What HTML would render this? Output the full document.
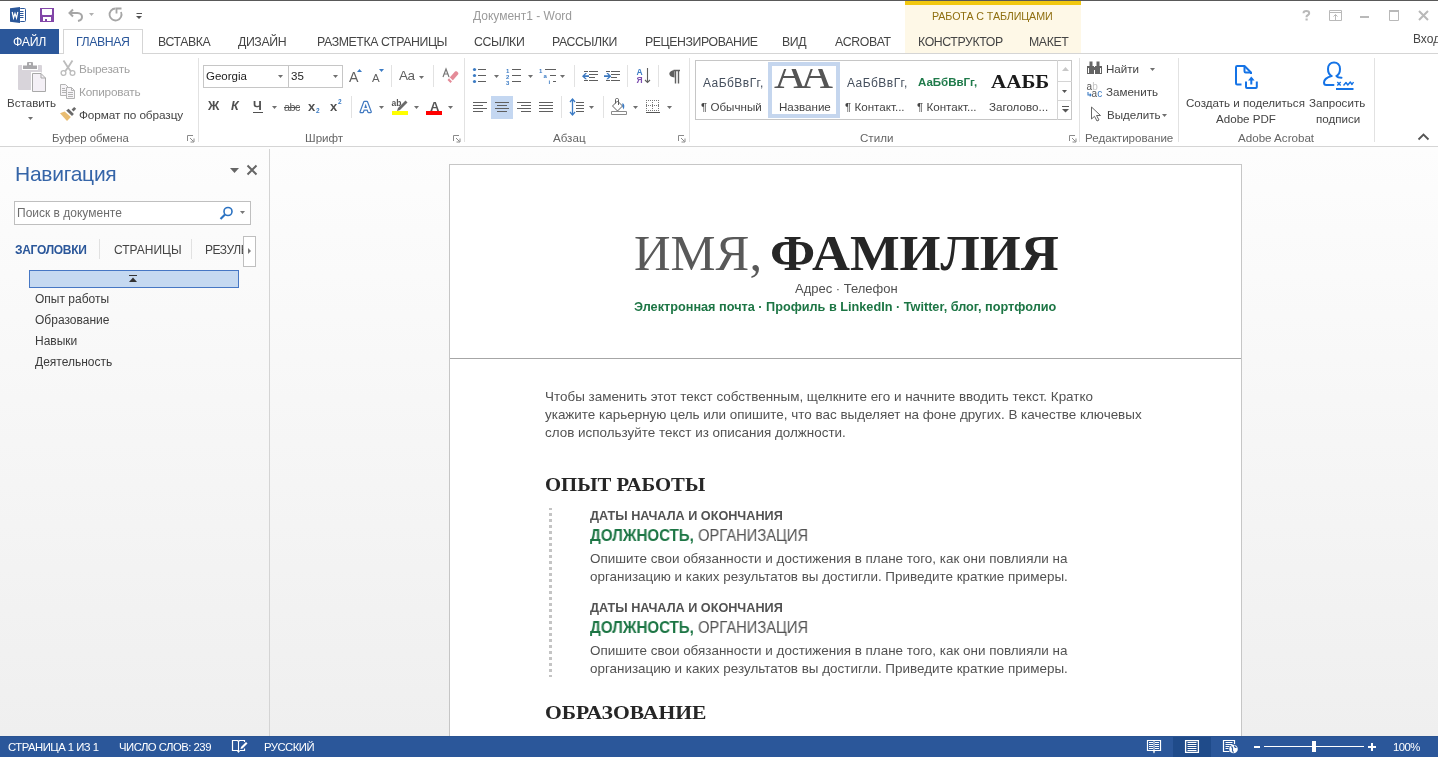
<!DOCTYPE html>
<html><head><meta charset="utf-8"><title>Word</title>
<style>
html,body{margin:0;padding:0;width:1438px;height:757px;overflow:hidden;background:#fff;font-family:"Liberation Sans",sans-serif}
.t{position:absolute;white-space:nowrap;will-change:transform}
.r{position:absolute}
.s{position:absolute;overflow:visible;will-change:transform}
</style></head><body>
<div class="r" style="left:0px;top:0px;width:1438px;height:1px;background:#595959"></div>
<div class="r" style="left:0px;top:1px;width:1438px;height:146px;background:#fff"></div>
<div class="r" style="left:905px;top:1px;width:176px;height:52px;background:#fef8e7"></div>
<div class="r" style="left:905px;top:1px;width:176px;height:4px;background:#f2c80f"></div>
<div class="r" style="left:0px;top:53px;width:1438px;height:1px;background:#d5d5d5"></div>
<div class="r" style="left:0px;top:146px;width:1438px;height:1px;background:#d5d5d5"></div>
<div class="r" style="left:0px;top:147px;width:1438px;height:589px;background:linear-gradient(#fdfdfd,#efefef)"></div>
<div class="r" style="left:269px;top:149px;width:1px;height:587px;background:#d4d4d4"></div>
<div class="r" style="left:0px;top:736px;width:1438px;height:21px;background:#2b579a"></div>
<svg class="s" style="left:10px;top:7px;" width="17" height="17" viewBox="0 0 17 17">
<rect x="9.5" y="1.5" width="6" height="13" rx="1" fill="#fff" stroke="#2b579a" stroke-width="1"/>
<path d="M10 4.5H13.5M10 6.5H13.5M10 8.5H13.5M10 10.5H13.5" stroke="#2b579a" stroke-width="1"/>
<path d="M0 1.2L10 0V16L0 14.8Z" fill="#2b579a"/>
<path d="M2.2 5L3.5 11L5 6.5L6.5 11L7.8 5" fill="none" stroke="#fff" stroke-width="1.2"/>
</svg>
<svg class="s" style="left:40px;top:8px;" width="14" height="14" viewBox="0 0 14 14">
<path d="M0 0H14V14H0Z" fill="#8246a8"/>
<path d="M2 1H12V6C12 6.6 11.6 7 11 7H3C2.4 7 2 6.6 2 6Z" fill="#fff"/>
<path d="M3 9H11V13H3Z" fill="#fff"/>
<path d="M5 11H7V13H5Z" fill="#8246a8"/>
</svg>
<svg class="s" style="left:67px;top:7px;" width="18" height="15" viewBox="0 0 18 15">
<path d="M6 2.5L2.5 6L6 9.5" fill="none" stroke="#a6a6a6" stroke-width="2"/>
<path d="M3 6H10.5C13.5 6 15 8 15 10C15 12 13.5 13.5 11 14" fill="none" stroke="#a6a6a6" stroke-width="2"/>
</svg>
<svg class="s" style="left:89px;top:13px;" width="6" height="4" viewBox="0 0 6 4"><path d="M0 0H5L2.5 3Z" fill="#b0b0b0"/></svg>
<svg class="s" style="left:107px;top:7px;" width="17" height="16" viewBox="0 0 17 16">
<path d="M8.5 1.5A6 6 0 1 0 14 5" fill="none" stroke="#a6a6a6" stroke-width="1.8"/>
<path d="M9.5 6.5V1.5H14.5" fill="none" stroke="#a6a6a6" stroke-width="1.8"/>
</svg>
<svg class="s" style="left:136px;top:12px;" width="7" height="8" viewBox="0 0 7 8"><path d="M0.5 1.5H6" stroke="#555" stroke-width="1"/><path d="M0 4H6L3 7Z" fill="#555"/></svg>
<div class="t" style="left:473px;top:10.00px;font-size:12px;line-height:12px;color:#9a9a9a;font-weight:normal;font-family:'Liberation Sans', sans-serif;">Документ1 - Word</div>
<div class="t" style="left:932px;top:11.00px;font-size:10.7px;line-height:10.7px;color:#8f6f10;font-weight:normal;font-family:'Liberation Sans', sans-serif;letter-spacing:-0.1px">РАБОТА С ТАБЛИЦАМИ</div>
<svg class="s" style="left:1302px;top:10px;" width="9" height="11" viewBox="0 0 9 11"><path d="M1.5 3.2C1.5 1.8 2.8 1 4.3 1C6 1 7.2 1.9 7.2 3.2C7.2 4.8 5.3 5 4.6 6.3V7.2" fill="none" stroke="#b9b9b9" stroke-width="2"/><path d="M3.5 8.5H5.7V10.5H3.5Z" fill="#b9b9b9"/></svg>
<svg class="s" style="left:1329px;top:10px;" width="14" height="11" viewBox="0 0 14 11"><path d="M0.5 0.5H12.5V10.5H0.5Z" fill="none" stroke="#b9b9b9"/><path d="M1 2.5H12" stroke="#b9b9b9"/><path d="M6.5 10V4.5M4.5 6.5L6.5 4.5L8.5 6.5" fill="none" stroke="#b9b9b9"/></svg>
<div class="r" style="left:1360px;top:16px;width:9px;height:2px;background:#b9b9b9"></div>
<svg class="s" style="left:1389px;top:10px;" width="10" height="11" viewBox="0 0 10 11"><path d="M0.5 0.5H9.5V10.5H0.5Z" fill="none" stroke="#b9b9b9"/><path d="M0 0H10V2H0Z" fill="#b9b9b9"/></svg>
<svg class="s" style="left:1418px;top:10px;" width="11" height="11" viewBox="0 0 11 11"><path d="M1 1L10 10M10 1L1 10" stroke="#b9b9b9" stroke-width="2"/></svg>
<div class="r" style="left:0px;top:29px;width:59px;height:25px;background:#2b579a"></div>
<div class="t" style="left:13px;top:36.00px;font-size:12.3px;line-height:12.3px;color:#fff;font-weight:normal;font-family:'Liberation Sans', sans-serif;letter-spacing:-0.3px">ФАЙЛ</div>
<div class="r" style="left:63px;top:29px;width:80px;height:25px;background:#fff;border:1px solid #d5d5d5;border-bottom:none;box-sizing:border-box"></div>
<div class="t" style="left:76px;top:36.00px;font-size:12.3px;line-height:12.3px;color:#2b579a;font-weight:normal;font-family:'Liberation Sans', sans-serif;letter-spacing:-0.4px">ГЛАВНАЯ</div>
<div class="t" style="left:158px;top:36.00px;font-size:12.3px;line-height:12.3px;color:#444;font-weight:normal;font-family:'Liberation Sans', sans-serif;letter-spacing:-0.4px">ВСТАВКА</div>
<div class="t" style="left:238px;top:36.00px;font-size:12.3px;line-height:12.3px;color:#444;font-weight:normal;font-family:'Liberation Sans', sans-serif;letter-spacing:-0.4px">ДИЗАЙН</div>
<div class="t" style="left:317px;top:36.00px;font-size:12.3px;line-height:12.3px;color:#444;font-weight:normal;font-family:'Liberation Sans', sans-serif;letter-spacing:-0.4px">РАЗМЕТКА СТРАНИЦЫ</div>
<div class="t" style="left:474px;top:36.00px;font-size:12.3px;line-height:12.3px;color:#444;font-weight:normal;font-family:'Liberation Sans', sans-serif;letter-spacing:-0.4px">ССЫЛКИ</div>
<div class="t" style="left:552px;top:36.00px;font-size:12.3px;line-height:12.3px;color:#444;font-weight:normal;font-family:'Liberation Sans', sans-serif;letter-spacing:-0.4px">РАССЫЛКИ</div>
<div class="t" style="left:645px;top:36.00px;font-size:12.3px;line-height:12.3px;color:#444;font-weight:normal;font-family:'Liberation Sans', sans-serif;letter-spacing:-0.4px">РЕЦЕНЗИРОВАНИЕ</div>
<div class="t" style="left:782px;top:36.00px;font-size:12.3px;line-height:12.3px;color:#444;font-weight:normal;font-family:'Liberation Sans', sans-serif;letter-spacing:-0.4px">ВИД</div>
<div class="t" style="left:835px;top:36.00px;font-size:12.3px;line-height:12.3px;color:#444;font-weight:normal;font-family:'Liberation Sans', sans-serif;letter-spacing:-0.4px">ACROBAT</div>
<div class="t" style="left:918px;top:36.00px;font-size:12.3px;line-height:12.3px;color:#444;font-weight:normal;font-family:'Liberation Sans', sans-serif;letter-spacing:-0.4px">КОНСТРУКТОР</div>
<div class="t" style="left:1029px;top:36.00px;font-size:12.3px;line-height:12.3px;color:#444;font-weight:normal;font-family:'Liberation Sans', sans-serif;letter-spacing:-0.4px">МАКЕТ</div>
<div class="t" style="left:1412.5px;top:33.00px;font-size:12px;line-height:12px;color:#444;font-weight:normal;font-family:'Liberation Sans', sans-serif;">Вход</div>
<div class="r" style="left:198px;top:58px;width:1px;height:84px;background:#e2e2e2"></div>
<div class="r" style="left:464px;top:58px;width:1px;height:84px;background:#e2e2e2"></div>
<div class="r" style="left:689px;top:58px;width:1px;height:84px;background:#e2e2e2"></div>
<div class="r" style="left:1079px;top:58px;width:1px;height:84px;background:#e2e2e2"></div>
<div class="r" style="left:1178px;top:58px;width:1px;height:84px;background:#e2e2e2"></div>
<div class="r" style="left:1374px;top:58px;width:1px;height:84px;background:#e2e2e2"></div>
<svg class="s" style="left:17px;top:61px;" width="31" height="32" viewBox="0 0 31 32">
<rect x="1" y="4" width="24" height="25" rx="1" fill="#d8d4da"/>
<rect x="5" y="3" width="16" height="6" fill="#fff"/>
<rect x="6" y="4.5" width="14" height="3.5" fill="#a9a8ab"/>
<rect x="10" y="1" width="6" height="5" rx="1" fill="#a9a8ab"/>
<rect x="12" y="2.2" width="2" height="1.6" fill="#fff"/>
<path d="M14 11H24L30 17V32H14Z" fill="#fff"/>
<path d="M15.5 12.5H24L28.5 17V30.5H15.5Z" fill="#f4f0f6" stroke="#a9a9a9"/>
<path d="M24 12.5V17H28.5" fill="none" stroke="#a9a9a9"/>
</svg>
<div class="t" style="left:6.5px;top:97.00px;font-size:11.6px;line-height:11.6px;color:#444;font-weight:normal;font-family:'Liberation Sans', sans-serif;">Вставить</div>
<svg class="s" style="left:28px;top:117px;" width="6" height="4" viewBox="0 0 6 4"><path d="M0 0H5L2.5 3Z" fill="#6f6f6f"/></svg>
<svg class="s" style="left:60px;top:60px;" width="16" height="16" viewBox="0 0 16 16">
<path d="M3.5 0.5L8 7.5M12.5 0.5L8 7.5M8 7.5L5 11.5M8 7.5L11 11.5" stroke="#bcbcbc" stroke-width="1.8" fill="none"/>
<circle cx="3.5" cy="13" r="2.4" fill="none" stroke="#bcbcbc" stroke-width="1.3"/>
<circle cx="12.5" cy="13" r="2.4" fill="none" stroke="#bcbcbc" stroke-width="1.3"/>
</svg>
<div class="t" style="left:79px;top:64.00px;font-size:11.8px;line-height:11.8px;color:#a2a2a2;font-weight:normal;font-family:'Liberation Sans', sans-serif;letter-spacing:-0.2px">Вырезать</div>
<svg class="s" style="left:59px;top:83px;" width="17" height="16" viewBox="0 0 17 16">
<path d="M1.5 1.5H6.5L9.5 4.5V12.5H1.5Z" fill="#f7f5f8" stroke="#b3b3b3"/>
<path d="M3 5.5H6M3 7.5H7M3 9.5H7" stroke="#b3b3b3"/>
<path d="M7.5 4.5H12.5L15.5 7.5V15.5H7.5Z" fill="#f7f5f8" stroke="#b3b3b3"/>
<path d="M9 9.5H14M9 11.5H14M9 13.5H14M12.5 4.5V7.5H15.5" fill="none" stroke="#b3b3b3"/>
</svg>
<div class="t" style="left:79px;top:87.00px;font-size:11.8px;line-height:11.8px;color:#a2a2a2;font-weight:normal;font-family:'Liberation Sans', sans-serif;letter-spacing:-0.2px">Копировать</div>
<svg class="s" style="left:56px;top:102px;" width="24" height="22" viewBox="0 0 24 22">
<path d="M4 11.2L8.6 9.4L14.9 15L11 19Z" fill="#e9bd72"/>
<path d="M10.2 8.4L12.6 6.8L17.9 12L16 14Z" fill="#6a6a6a"/>
<path d="M15.6 7.4L18.2 4.9L20.2 6.8L17.5 9.4Z" fill="#6a6a6a"/>
</svg>
<div class="t" style="left:79px;top:110.00px;font-size:11.8px;line-height:11.8px;color:#444;font-weight:normal;font-family:'Liberation Sans', sans-serif;letter-spacing:-0.1px">Формат по образцу</div>
<div class="t" style="left:52px;top:133.00px;font-size:11.3px;line-height:11.3px;color:#666;font-weight:normal;font-family:'Liberation Sans', sans-serif;">Буфер обмена</div>
<svg class="s" style="left:187px;top:135px;" width="8" height="8" viewBox="0 0 8 8"><path d="M0.5 6V0.5H6" fill="none" stroke="#8a8a8a"/><path d="M3 3L6.5 6.5M7 3.5V7H3.5" fill="none" stroke="#8a8a8a"/></svg>
<div class="r" style="left:203px;top:65px;width:86px;height:23px;background:#fff;border:1px solid #c6c6c6;box-sizing:border-box"></div>
<div class="r" style="left:288px;top:65px;width:55px;height:23px;background:#fff;border:1px solid #c6c6c6;box-sizing:border-box"></div>
<div class="t" style="left:206px;top:71.00px;font-size:11.5px;line-height:11.5px;color:#222;font-weight:normal;font-family:'Liberation Sans', sans-serif;">Georgia</div>
<div class="t" style="left:291px;top:71.00px;font-size:11.5px;line-height:11.5px;color:#222;font-weight:normal;font-family:'Liberation Sans', sans-serif;">35</div>
<svg class="s" style="left:278px;top:75px;" width="6" height="4" viewBox="0 0 6 4"><path d="M0 0H5L2.5 3Z" fill="#6f6f6f"/></svg>
<svg class="s" style="left:333px;top:75px;" width="6" height="4" viewBox="0 0 6 4"><path d="M0 0H5L2.5 3Z" fill="#6f6f6f"/></svg>
<div class="t" style="left:349px;top:70.00px;font-size:14.2px;line-height:14.2px;color:#606060;font-weight:normal;font-family:'Liberation Sans', sans-serif;">A</div>
<svg class="s" style="left:357px;top:69px;" width="6" height="3" viewBox="0 0 6 3"><path d="M0 3L2.5 0L5 3Z" fill="#3b7bc4"/></svg>
<div class="t" style="left:371.5px;top:73.00px;font-size:11.5px;line-height:11.5px;color:#606060;font-weight:normal;font-family:'Liberation Sans', sans-serif;">A</div>
<svg class="s" style="left:379px;top:69px;" width="6" height="3" viewBox="0 0 6 3"><path d="M0 0L2.5 3L5 0Z" fill="#3b7bc4"/></svg>
<div class="r" style="left:391px;top:65px;width:1px;height:22px;background:#e2e2e2"></div>
<div class="t" style="left:399px;top:69.00px;font-size:13.5px;line-height:13.5px;color:#606060;font-weight:normal;font-family:'Liberation Sans', sans-serif;letter-spacing:-0.6px">Aa</div>
<svg class="s" style="left:419px;top:76px;" width="6" height="4" viewBox="0 0 6 4"><path d="M0 0H5L2.5 3Z" fill="#6f6f6f"/></svg>
<div class="r" style="left:433px;top:65px;width:1px;height:22px;background:#e2e2e2"></div>
<svg class="s" style="left:442px;top:67px;" width="17" height="18" viewBox="0 0 17 18">
<path d="M1 10L4 2L7 10M2.2 7H5.8" fill="none" stroke="#777" stroke-width="1.2"/>
<path d="M5.5 13L13 4.5C13.5 4 14.5 4 15 4.5L16 5.5C16.5 6 16.5 7 16 7.5L8.5 16Z" fill="#e48b98"/>
<path d="M7.5 11L11 14.5" stroke="#fff" stroke-width="1.2"/>
</svg>
<div class="t" style="left:207.5px;top:100.00px;font-size:12.5px;line-height:12.5px;color:#505050;font-weight:bold;font-family:'Liberation Sans', sans-serif;">Ж</div>
<div class="t" style="left:231px;top:100.00px;font-size:12.5px;line-height:12.5px;color:#505050;font-weight:bold;font-family:'Liberation Sans', sans-serif;font-style:italic">К</div>
<div class="t" style="left:253px;top:100.00px;font-size:12.5px;line-height:12.5px;color:#505050;font-weight:bold;font-family:'Liberation Sans', sans-serif;">Ч</div>
<div class="r" style="left:253px;top:112px;width:10px;height:1px;background:#505050"></div>
<svg class="s" style="left:272px;top:106px;" width="6" height="4" viewBox="0 0 6 4"><path d="M0 0H5L2.5 3Z" fill="#6f6f6f"/></svg>
<div class="t" style="left:284px;top:102.00px;font-size:10.8px;line-height:10.8px;color:#555;font-weight:normal;font-family:'Liberation Sans', sans-serif;letter-spacing:-0.5px">abc</div>
<div class="r" style="left:284px;top:107px;width:16px;height:1px;background:#555"></div>
<div class="t" style="left:308px;top:100.00px;font-size:13px;line-height:13px;color:#505050;font-weight:bold;font-family:'Liberation Sans', sans-serif;">x</div>
<div class="t" style="left:315.5px;top:108.00px;font-size:6.5px;line-height:6.5px;color:#3b7bc4;font-weight:bold;font-family:'Liberation Sans', sans-serif;">2</div>
<div class="t" style="left:330px;top:100.00px;font-size:13px;line-height:13px;color:#505050;font-weight:bold;font-family:'Liberation Sans', sans-serif;">x</div>
<div class="t" style="left:337.5px;top:99.00px;font-size:6.5px;line-height:6.5px;color:#3b7bc4;font-weight:bold;font-family:'Liberation Sans', sans-serif;">2</div>
<div class="r" style="left:351px;top:96px;width:1px;height:22px;background:#e2e2e2"></div>
<svg class="s" style="left:358px;top:97px;" width="18" height="18" viewBox="0 0 18 18"><text x="2.3" y="15.2" font-family="Liberation Sans" font-weight="bold" font-size="15" fill="#fff" stroke="#3f78c0" stroke-width="2.4" stroke-linejoin="round" paint-order="stroke">A</text></svg>
<svg class="s" style="left:379px;top:106px;" width="6" height="4" viewBox="0 0 6 4"><path d="M0 0H5L2.5 3Z" fill="#6f6f6f"/></svg>
<svg class="s" style="left:391px;top:97px;" width="18" height="19" viewBox="0 0 18 19">
<text x="0.5" y="8.5" font-family="Liberation Sans" font-weight="bold" font-size="8.5" fill="#555">ab</text>
<path d="M6 14L7 11L14.5 3.5L16.5 5.5L9 13Z" fill="#6a6a6a"/>
<path d="M1 14H17V18H1Z" fill="#ffff00"/>
</svg>
<svg class="s" style="left:414px;top:106px;" width="6" height="4" viewBox="0 0 6 4"><path d="M0 0H5L2.5 3Z" fill="#6f6f6f"/></svg>
<div class="t" style="left:429.5px;top:100.00px;font-size:13px;line-height:13px;color:#555;font-weight:bold;font-family:'Liberation Sans', sans-serif;">A</div>
<div class="r" style="left:426px;top:111px;width:16px;height:4px;background:#ff0000"></div>
<svg class="s" style="left:448px;top:106px;" width="6" height="4" viewBox="0 0 6 4"><path d="M0 0H5L2.5 3Z" fill="#6f6f6f"/></svg>
<div class="t" style="left:305px;top:132.00px;font-size:11.6px;line-height:11.6px;color:#666;font-weight:normal;font-family:'Liberation Sans', sans-serif;">Шрифт</div>
<svg class="s" style="left:453px;top:135px;" width="8" height="8" viewBox="0 0 8 8"><path d="M0.5 6V0.5H6" fill="none" stroke="#8a8a8a"/><path d="M3 3L6.5 6.5M7 3.5V7H3.5" fill="none" stroke="#8a8a8a"/></svg>
<svg class="s" style="left:472px;top:67px;" width="16" height="16" viewBox="0 0 16 16"><circle cx="2.5" cy="2.5" r="1.6" fill="#3b7bc4"/><circle cx="2.5" cy="8.5" r="1.6" fill="#3b7bc4"/><circle cx="2.5" cy="14.5" r="1.6" fill="#3b7bc4"/><path d="M6 2.5H14M6 8.5H14M6 14.5H14" stroke="#5f5f5f"/></svg>
<svg class="s" style="left:494px;top:75px;" width="6" height="4" viewBox="0 0 6 4"><path d="M0 0H5L2.5 3Z" fill="#6f6f6f"/></svg>
<svg class="s" style="left:505px;top:66px;" width="17" height="18" viewBox="0 0 17 18"><text x="1" y="6.5" font-size="6" font-weight="bold" font-family="Liberation Sans" fill="#3b7bc4">1</text><text x="1" y="12.5" font-size="6" font-weight="bold" font-family="Liberation Sans" fill="#3b7bc4">2</text><text x="1" y="18.5" font-size="6" font-weight="bold" font-family="Liberation Sans" fill="#3b7bc4">3</text><path d="M7 3.5H16M7 9.5H16M7 15.5H16" stroke="#5f5f5f"/></svg>
<svg class="s" style="left:528px;top:75px;" width="6" height="4" viewBox="0 0 6 4"><path d="M0 0H5L2.5 3Z" fill="#6f6f6f"/></svg>
<svg class="s" style="left:538px;top:66px;" width="19" height="19" viewBox="0 0 19 19"><text x="1" y="6.5" font-size="6" font-weight="bold" font-family="Liberation Sans" fill="#3b7bc4">1</text><text x="5.5" y="11.5" font-size="6" font-weight="bold" font-family="Liberation Sans" fill="#3b7bc4">a</text><text x="10.5" y="18" font-size="6" font-weight="bold" font-family="Liberation Sans" fill="#3b7bc4">i</text><path d="M7 3.5H18M12 9.5H18M15 15.5H18" stroke="#5f5f5f"/></svg>
<svg class="s" style="left:560px;top:75px;" width="6" height="4" viewBox="0 0 6 4"><path d="M0 0H5L2.5 3Z" fill="#6f6f6f"/></svg>
<div class="r" style="left:574px;top:65px;width:1px;height:22px;background:#e2e2e2"></div>
<svg class="s" style="left:581px;top:70px;" width="18" height="12" viewBox="0 0 18 12"><path d="M3 1.5H7M8 1.5H17M8 4.5H17M8 7.5H14M3 10.5H7M8 10.5H17" stroke="#5f5f5f"/><path d="M1 6.2L4.3 3H6L3.8 5.2H8V7.1H3.8L6 9.3H4.3Z" fill="#3b78c0"/></svg>
<svg class="s" style="left:603px;top:70px;" width="18" height="12" viewBox="0 0 18 12"><path d="M3 1.5H7M8 1.5H17M8 4.5H17M8 7.5H14M3 10.5H7M8 10.5H17" stroke="#5f5f5f"/><path d="M8.3 6.2L5 3H3.3L5.5 5.2H1V7.1H5.5L3.3 9.3H5Z" fill="#3b78c0"/></svg>
<div class="r" style="left:627px;top:65px;width:1px;height:22px;background:#e2e2e2"></div>
<svg class="s" style="left:636px;top:67px;" width="16" height="17" viewBox="0 0 16 17"><text x="0.5" y="8" font-size="8.5" font-weight="bold" font-family="Liberation Sans" fill="#3b7bc4">A</text><text x="0.5" y="16" font-size="8.5" font-weight="bold" font-family="Liberation Sans" fill="#7e4fb0">Я</text><path d="M11.5 1V15.5M9 13L11.5 15.5L14 13" fill="none" stroke="#5f5f5f" stroke-width="1.1"/></svg>
<div class="r" style="left:658px;top:65px;width:1px;height:22px;background:#e2e2e2"></div>
<svg class="s" style="left:669px;top:70px;" width="12" height="14" viewBox="0 0 12 14"><path d="M4.5 0.5H11M6.5 0.5V13.5M9.5 0.5V13.5" stroke="#5f5f5f" stroke-width="1.4" fill="none"/><path d="M5.5 0.2C2 0.2 0.3 2 0.3 3.8C0.3 5.6 2 7.4 5.5 7.4Z" fill="#5f5f5f"/></svg>
<div class="r" style="left:491px;top:96px;width:22px;height:23px;background:#c4d7f1"></div>
<svg class="s" style="left:473px;top:102px;" width="14" height="10" viewBox="0 0 14 10"><path d="M0 0.5H14M0 3.5H10M0 6.5H14M0 9.5H10" stroke="#5f5f5f"/></svg>
<svg class="s" style="left:495px;top:102px;" width="14" height="10" viewBox="0 0 14 10"><path d="M0 0.5H14M2 3.5H12M0 6.5H14M2 9.5H12" stroke="#5f5f5f"/></svg>
<svg class="s" style="left:517px;top:102px;" width="14" height="10" viewBox="0 0 14 10"><path d="M0 0.5H14M4 3.5H14M0 6.5H14M4 9.5H14" stroke="#5f5f5f"/></svg>
<svg class="s" style="left:539px;top:102px;" width="14" height="10" viewBox="0 0 14 10"><path d="M0 0.5H14M0 3.5H14M0 6.5H14M0 9.5H14" stroke="#5f5f5f"/></svg>
<div class="r" style="left:561px;top:96px;width:1px;height:22px;background:#e2e2e2"></div>
<svg class="s" style="left:569px;top:98px;" width="16" height="18" viewBox="0 0 16 18"><path d="M3.5 1.5V16.5" stroke="#3b7bc4" stroke-width="1.3"/><path d="M1 4L3.5 1L6 4M1 14L3.5 17L6 14" fill="none" stroke="#3b7bc4" stroke-width="1.3"/><path d="M7 4.5H15M7 7.5H15M7 10.5H15M7 13.5H15" stroke="#5f5f5f"/></svg>
<svg class="s" style="left:589px;top:106px;" width="6" height="4" viewBox="0 0 6 4"><path d="M0 0H5L2.5 3Z" fill="#6f6f6f"/></svg>
<div class="r" style="left:603px;top:96px;width:1px;height:22px;background:#e2e2e2"></div>
<svg class="s" style="left:610px;top:98px;" width="18" height="18" viewBox="0 0 18 18"><path d="M2.5 8L7.5 3L12.5 8L7.5 13Z" fill="#fff" stroke="#606060"/><path d="M5.5 5.5V1.5C5.5 0.9 6 0.5 6.5 0.5H7.5C8 0.5 8.5 0.9 8.5 1.5V7" fill="none" stroke="#606060"/><path d="M12.5 5C14.5 6 15 8.5 13.5 11.5C12.5 9 12 8 12.5 5Z" fill="#3b7bc4"/><path d="M1.5 13.5H16.5V16.5H1.5Z" fill="#fff" stroke="#8a8a8a"/></svg>
<svg class="s" style="left:633px;top:106px;" width="6" height="4" viewBox="0 0 6 4"><path d="M0 0H5L2.5 3Z" fill="#6f6f6f"/></svg>
<svg class="s" style="left:646px;top:100px;" width="14" height="13" viewBox="0 0 14 13"><g fill="#777"><rect x="0" y="0" width="1" height="1"/><rect x="2" y="0" width="1" height="1"/><rect x="4" y="0" width="1" height="1"/><rect x="6" y="0" width="1" height="1"/><rect x="8" y="0" width="1" height="1"/><rect x="10" y="0" width="1" height="1"/><rect x="12" y="0" width="1" height="1"/><rect x="0" y="5" width="1" height="1"/><rect x="2" y="5" width="1" height="1"/><rect x="4" y="5" width="1" height="1"/><rect x="6" y="5" width="1" height="1"/><rect x="8" y="5" width="1" height="1"/><rect x="10" y="5" width="1" height="1"/><rect x="12" y="5" width="1" height="1"/><rect x="0" y="10" width="1" height="1"/><rect x="2" y="10" width="1" height="1"/><rect x="4" y="10" width="1" height="1"/><rect x="6" y="10" width="1" height="1"/><rect x="8" y="10" width="1" height="1"/><rect x="10" y="10" width="1" height="1"/><rect x="12" y="10" width="1" height="1"/><rect x="0" y="2" width="1" height="1"/><rect x="0" y="4" width="1" height="1"/><rect x="0" y="6" width="1" height="1"/><rect x="0" y="8" width="1" height="1"/><rect x="6" y="2" width="1" height="1"/><rect x="6" y="4" width="1" height="1"/><rect x="6" y="6" width="1" height="1"/><rect x="6" y="8" width="1" height="1"/><rect x="12" y="2" width="1" height="1"/><rect x="12" y="4" width="1" height="1"/><rect x="12" y="6" width="1" height="1"/><rect x="12" y="8" width="1" height="1"/></g><rect x="0" y="12" width="14" height="1" fill="#555"/></svg>
<svg class="s" style="left:667px;top:106px;" width="6" height="4" viewBox="0 0 6 4"><path d="M0 0H5L2.5 3Z" fill="#6f6f6f"/></svg>
<div class="t" style="left:553px;top:132.00px;font-size:11.6px;line-height:11.6px;color:#666;font-weight:normal;font-family:'Liberation Sans', sans-serif;">Абзац</div>
<svg class="s" style="left:678px;top:135px;" width="8" height="8" viewBox="0 0 8 8"><path d="M0.5 6V0.5H6" fill="none" stroke="#8a8a8a"/><path d="M3 3L6.5 6.5M7 3.5V7H3.5" fill="none" stroke="#8a8a8a"/></svg>
<div class="r" style="left:695px;top:60px;width:377px;height:60px;background:#fff;border:1px solid #c6c6c6;box-sizing:border-box"></div>
<div class="r" style="left:1057px;top:60px;width:15px;height:60px;border-left:1px solid #d4d4d4;box-sizing:border-box"></div>
<div class="r" style="left:1058px;top:81px;width:14px;height:1px;background:#d4d4d4"></div>
<div class="r" style="left:1058px;top:100px;width:14px;height:1px;background:#d4d4d4"></div>
<svg class="s" style="left:1062px;top:67px;" width="7" height="4" viewBox="0 0 7 4"><path d="M0 4H7L3.5 0Z" fill="#c8c8c8"/></svg>
<svg class="s" style="left:1062px;top:90px;" width="6" height="4" viewBox="0 0 6 4"><path d="M0 0H5L2.5 3Z" fill="#555"/></svg>
<svg class="s" style="left:1062px;top:106px;" width="7" height="7" viewBox="0 0 7 7"><path d="M0 0.5H7" stroke="#555"/><path d="M0 3H7L3.5 6.5Z" fill="#555"/></svg>
<div class="r" style="left:768px;top:62px;width:72px;height:56px;border:4px solid #c5d6ee;box-sizing:border-box"></div>
<div class="t" style="left:702.5px;top:77.00px;font-size:12px;line-height:12px;color:#46505e;font-weight:normal;font-family:'Liberation Sans', sans-serif;letter-spacing:0.45px">АаБбВвГг,</div>
<div class="t" style="left:700.5px;top:101.00px;font-size:11.6px;line-height:11.6px;color:#444;font-weight:normal;font-family:'Liberation Sans', sans-serif;">¶ Обычный</div>
<div class="r" style="left:772px;top:69px;width:64px;height:21px;overflow:hidden">
<div class="t" style="left:2px;top:-18.00px;font-size:45px;line-height:45px;color:#555;font-weight:normal;font-family:'Liberation Serif', serif;letter-spacing:-6px">AA</div>
</div>
<div class="t" style="left:778.5px;top:101.00px;font-size:11.6px;line-height:11.6px;color:#444;font-weight:normal;font-family:'Liberation Sans', sans-serif;">Название</div>
<div class="t" style="left:846.5px;top:77.00px;font-size:12px;line-height:12px;color:#46505e;font-weight:normal;font-family:'Liberation Sans', sans-serif;letter-spacing:0.45px">АаБбВвГг,</div>
<div class="t" style="left:845px;top:101.00px;font-size:11.6px;line-height:11.6px;color:#444;font-weight:normal;font-family:'Liberation Sans', sans-serif;">¶ Контакт...</div>
<div class="t" style="left:918px;top:77.00px;font-size:11.5px;line-height:11.5px;color:#1f7a4a;font-weight:bold;font-family:'Liberation Sans', sans-serif;">АаБбВвГг,</div>
<div class="t" style="left:917px;top:101.00px;font-size:11.6px;line-height:11.6px;color:#444;font-weight:normal;font-family:'Liberation Sans', sans-serif;">¶ Контакт...</div>
<div class="r" style="left:990px;top:66px;width:59px;height:26px;overflow:hidden">
<div class="t" style="left:1px;top:7.00px;font-size:18px;line-height:18px;color:#1b1b1b;font-weight:bold;font-family:'Liberation Serif', serif;transform:scaleX(1.17);transform-origin:0 0">ААББВ</div>
</div>
<div class="t" style="left:989px;top:101.00px;font-size:11.6px;line-height:11.6px;color:#444;font-weight:normal;font-family:'Liberation Sans', sans-serif;">Заголово...</div>
<div class="t" style="left:860px;top:132.00px;font-size:11.6px;line-height:11.6px;color:#666;font-weight:normal;font-family:'Liberation Sans', sans-serif;">Стили</div>
<svg class="s" style="left:1069px;top:135px;" width="8" height="8" viewBox="0 0 8 8"><path d="M0.5 6V0.5H6" fill="none" stroke="#8a8a8a"/><path d="M3 3L6.5 6.5M7 3.5V7H3.5" fill="none" stroke="#8a8a8a"/></svg>
<svg class="s" style="left:1087px;top:61px;" width="15" height="13" viewBox="0 0 15 13"><path d="M2.5 0.5H5.5V5H2.5ZM9.5 0.5H12.5V5H9.5Z" fill="#666"/><path d="M0 5H7V13H0ZM8 5H15V13H8ZM6 6H9V9H6Z" fill="#636363"/><path d="M1.5 7V12M13.5 7V12" stroke="#fff"/><circle cx="7.5" cy="4" r="0.8" fill="#fff"/></svg>
<div class="t" style="left:1106px;top:63.00px;font-size:11.6px;line-height:11.6px;color:#444;font-weight:normal;font-family:'Liberation Sans', sans-serif;">Найти</div>
<svg class="s" style="left:1150px;top:68px;" width="6" height="4" viewBox="0 0 6 4"><path d="M0 0H5L2.5 3Z" fill="#6f6f6f"/></svg>
<svg class="s" style="left:1086px;top:81px;" width="18" height="18" viewBox="0 0 18 18"><text x="0.5" y="9" font-size="10" font-family="Liberation Sans" fill="#555">a</text><text x="6.3" y="9" font-size="10" font-family="Liberation Sans" fill="#c4c4c4">b</text><text x="5.5" y="16" font-size="10" font-family="Liberation Sans" fill="#555">a</text><text x="11.3" y="16" font-size="10" font-family="Liberation Sans" fill="#3b7bc4">c</text><path d="M2 11V14H5M3.8 12.6L5 14L3.8 15.4" stroke="#3b7bc4" fill="none" stroke-width="1.1"/></svg>
<div class="t" style="left:1106px;top:86.00px;font-size:11.6px;line-height:11.6px;color:#444;font-weight:normal;font-family:'Liberation Sans', sans-serif;">Заменить</div>
<svg class="s" style="left:1090px;top:106px;" width="12" height="16" viewBox="0 0 12 16"><path d="M1.5 1V13L4.5 10.3L7 15L9 14L6.5 9.5H10.5Z" fill="#fff" stroke="#666" stroke-linejoin="round"/></svg>
<div class="t" style="left:1106.5px;top:109.00px;font-size:11.6px;line-height:11.6px;color:#444;font-weight:normal;font-family:'Liberation Sans', sans-serif;">Выделить</div>
<svg class="s" style="left:1162px;top:114px;" width="6" height="4" viewBox="0 0 6 4"><path d="M0 0H5L2.5 3Z" fill="#6f6f6f"/></svg>
<div class="t" style="left:1085px;top:132.00px;font-size:11.6px;line-height:11.6px;color:#666;font-weight:normal;font-family:'Liberation Sans', sans-serif;">Редактирование</div>
<svg class="s" style="left:1233px;top:63px;" width="27" height="28" viewBox="0 0 27 28"><path d="M8.5 21.5H4.2C3.5 21.5 3 21 3 20.3V4.2C3 3.5 3.5 3 4.2 3H11.5L18 9.5V11" fill="none" stroke="#1473e6" stroke-width="2" stroke-linejoin="round"/><path d="M11.5 3.5V8.3C11.5 9 12 9.5 12.7 9.5H17.5" fill="none" stroke="#1473e6" stroke-width="2"/><path d="M13 18.5V24C13 24.6 13.4 25 14 25H22.8C23.4 25 23.8 24.6 23.8 24V18.5" fill="none" stroke="#1473e6" stroke-width="2" stroke-linejoin="round"/><path d="M18.3 21.5V15" stroke="#1473e6" stroke-width="2"/><path d="M15 17.5L18.3 13.5L21.6 17.5Z" fill="#1473e6"/></svg>
<div class="t" style="left:1185.5px;top:97.00px;font-size:11.6px;line-height:11.6px;color:#444;font-weight:normal;font-family:'Liberation Sans', sans-serif;">Создать и поделиться</div>
<div class="t" style="left:1215.5px;top:113.00px;font-size:11.6px;line-height:11.6px;color:#444;font-weight:normal;font-family:'Liberation Sans', sans-serif;">Adobe PDF</div>
<svg class="s" style="left:1321px;top:60px;" width="34" height="31" viewBox="0 0 34 31"><path d="M10.5 16C8 14.5 7 11.5 7 9C7 5 9.5 2.5 13 2.5C16.5 2.5 19 5 19 9C19 11.5 18 14.5 15.5 16C16.5 17.5 18.5 17.8 20.5 17.8" fill="none" stroke="#1473e6" stroke-width="2" stroke-linecap="round"/><path d="M10.5 16C5.5 17.5 3 19.5 3 22.5C3 24 3.8 25 5.3 25H12.5" fill="none" stroke="#1473e6" stroke-width="2" stroke-linecap="round"/><path d="M16.3 22L19.7 25.5M19.7 22L16.3 25.5" stroke="#1473e6" stroke-width="1.4"/><path d="M22.5 25.5L25 22.5L26.8 25L29.3 22L31 24.5L32.5 22" fill="none" stroke="#1473e6" stroke-width="1.4" stroke-linejoin="round"/><path d="M15 29H32.5" stroke="#1473e6" stroke-width="2"/></svg>
<div class="t" style="left:1308.5px;top:97.00px;font-size:11.6px;line-height:11.6px;color:#444;font-weight:normal;font-family:'Liberation Sans', sans-serif;">Запросить</div>
<div class="t" style="left:1315.5px;top:113.00px;font-size:11.6px;line-height:11.6px;color:#444;font-weight:normal;font-family:'Liberation Sans', sans-serif;">подписи</div>
<div class="t" style="left:1238px;top:132.00px;font-size:11.6px;line-height:11.6px;color:#666;font-weight:normal;font-family:'Liberation Sans', sans-serif;">Adobe Acrobat</div>
<svg class="s" style="left:1417px;top:133px;" width="13" height="8" viewBox="0 0 13 8"><path d="M1.5 6.5L6.5 1.5L11.5 6.5" fill="none" stroke="#555" stroke-width="1.8"/></svg>
<div class="t" style="left:14.5px;top:163.00px;font-size:21px;line-height:21px;color:#3565a8;font-weight:normal;font-family:'Liberation Sans', sans-serif;letter-spacing:-0.25px">Навигация</div>
<svg class="s" style="left:230px;top:168px;" width="10" height="6" viewBox="0 0 10 6"><path d="M0 0H9L4.5 5Z" fill="#666"/></svg>
<svg class="s" style="left:246px;top:164px;" width="12" height="12" viewBox="0 0 12 12"><path d="M1.5 1.5L10.5 10.5M10.5 1.5L1.5 10.5" stroke="#666" stroke-width="2"/></svg>
<div class="r" style="left:14px;top:201px;width:237px;height:24px;background:#fff;border:1px solid #bfbfbf;box-sizing:border-box"></div>
<div class="t" style="left:17px;top:207.00px;font-size:12px;line-height:12px;color:#6d6d6d;font-weight:normal;font-family:'Liberation Sans', sans-serif;">Поиск в документе</div>
<svg class="s" style="left:219px;top:206px;" width="15" height="14" viewBox="0 0 15 14"><circle cx="9" cy="5.5" r="4" fill="none" stroke="#2b72c2" stroke-width="1.6"/><path d="M6 8.5L1.5 13" stroke="#2b72c2" stroke-width="2.2"/></svg>
<svg class="s" style="left:240px;top:211px;" width="6" height="4" viewBox="0 0 6 4"><path d="M0 0H5L2.5 3Z" fill="#777"/></svg>
<div class="t" style="left:15px;top:244.00px;font-size:12px;line-height:12px;color:#2b579a;font-weight:bold;font-family:'Liberation Sans', sans-serif;letter-spacing:-0.3px">ЗАГОЛОВКИ</div>
<div class="r" style="left:99px;top:239px;width:1px;height:20px;background:#e1e1e1"></div>
<div class="t" style="left:114px;top:244.00px;font-size:12px;line-height:12px;color:#444;font-weight:normal;font-family:'Liberation Sans', sans-serif;">СТРАНИЦЫ</div>
<div class="r" style="left:191px;top:239px;width:1px;height:20px;background:#e1e1e1"></div>
<div class="r" style="left:205px;top:240px;width:40px;height:20px;overflow:hidden">
<div class="t" style="left:0px;top:4.00px;font-size:12px;line-height:12px;color:#444;font-weight:normal;font-family:'Liberation Sans', sans-serif;letter-spacing:-0.45px">РЕЗУЛЬТАТЫ</div>
</div>
<div class="r" style="left:243px;top:236px;width:13px;height:31px;background:#fff;border:1px solid #bfbfbf;box-sizing:border-box"></div>
<svg class="s" style="left:248px;top:248px;" width="4" height="6" viewBox="0 0 4 6"><path d="M0 0L3 3L0 6Z" fill="#777"/></svg>
<div class="r" style="left:29px;top:270px;width:210px;height:18px;background:#c5d9f1;border:1px solid #4677c4;box-sizing:border-box"></div>
<svg class="s" style="left:128px;top:275px;" width="10" height="8" viewBox="0 0 10 8"><path d="M1 0.5H9" stroke="#333"/><path d="M1 7H9L5 2.5Z" fill="#333"/></svg>
<div class="t" style="left:35px;top:293.00px;font-size:12px;line-height:12px;color:#3c3c3c;font-weight:normal;font-family:'Liberation Sans', sans-serif;">Опыт работы</div>
<div class="t" style="left:35px;top:314.00px;font-size:12px;line-height:12px;color:#3c3c3c;font-weight:normal;font-family:'Liberation Sans', sans-serif;">Образование</div>
<div class="t" style="left:35px;top:335.00px;font-size:12px;line-height:12px;color:#3c3c3c;font-weight:normal;font-family:'Liberation Sans', sans-serif;">Навыки</div>
<div class="t" style="left:35px;top:356.00px;font-size:12px;line-height:12px;color:#3c3c3c;font-weight:normal;font-family:'Liberation Sans', sans-serif;">Деятельность</div>
<div class="r" style="left:449px;top:164px;width:793px;height:572px;background:#fff;border:1px solid #c6c6c6;border-bottom:none;box-sizing:border-box"></div>
<div class="r" style="left:450px;top:358px;width:791px;height:1px;background:#a6a6a6"></div>
<div class="t" style="left:634px;top:228.00px;font-size:50px;line-height:50px;color:#595959;font-weight:normal;font-family:'Liberation Serif', serif;transform:scaleX(1.013);transform-origin:0 0">ИМЯ,</div>
<div class="t" style="left:770px;top:228.00px;font-size:50px;line-height:50px;color:#262626;font-weight:bold;font-family:'Liberation Serif', serif;transform:scaleX(1.053);transform-origin:0 0">ФАМИЛИЯ</div>
<div class="t" style="left:795px;top:282.00px;font-size:13px;line-height:13px;color:#505050;font-weight:normal;font-family:'Liberation Sans', sans-serif;">Адрес · Телефон</div>
<div class="t" style="left:634px;top:301.00px;font-size:12.7px;line-height:12.7px;color:#1c7544;font-weight:bold;font-family:'Liberation Sans', sans-serif;">Электронная почта · Профиль в LinkedIn · Twitter, блог, портфолио</div>
<div class="t" style="left:545px;top:390.00px;font-size:13.45px;line-height:13.45px;color:#525252;font-weight:normal;font-family:'Liberation Sans', sans-serif;">Чтобы заменить этот текст собственным, щелкните его и начните вводить текст. Кратко</div>
<div class="t" style="left:545px;top:408.00px;font-size:13.45px;line-height:13.45px;color:#525252;font-weight:normal;font-family:'Liberation Sans', sans-serif;">укажите карьерную цель или опишите, что вас выделяет на фоне других. В качестве ключевых</div>
<div class="t" style="left:545px;top:426.00px;font-size:13.45px;line-height:13.45px;color:#525252;font-weight:normal;font-family:'Liberation Sans', sans-serif;">слов используйте текст из описания должности.</div>
<div class="t" style="left:545px;top:476.00px;font-size:18px;line-height:18px;color:#262626;font-weight:bold;font-family:'Liberation Serif', serif;transform:scaleX(1.15);transform-origin:0 0">ОПЫТ РАБОТЫ</div>
<div class="r" style="left:549px;top:508px;width:3px;height:169px;background:repeating-linear-gradient(#c4c4c4 0 3px, transparent 3px 6px);background-position:0 -1px"></div>
<div class="t" style="left:590px;top:510.00px;font-size:12.67px;line-height:12.67px;color:#525252;font-weight:bold;font-family:'Liberation Sans', sans-serif;">ДАТЫ НАЧАЛА И ОКОНЧАНИЯ</div>
<div class="t" style="left:590px;top:528.00px;font-size:16px;line-height:16px;color:#525252;font-weight:normal;font-family:'Liberation Sans', sans-serif;transform:scaleX(0.944);transform-origin:0 0"><b style="color:#1c7544">ДОЛЖНОСТЬ,</b> <span style="font-size:15.6px">ОРГАНИЗАЦИЯ</span></div>
<div class="t" style="left:590px;top:552.00px;font-size:13.45px;line-height:13.45px;color:#525252;font-weight:normal;font-family:'Liberation Sans', sans-serif;">Опишите свои обязанности и достижения в плане того, как они повлияли на</div>
<div class="t" style="left:590px;top:570.00px;font-size:13.45px;line-height:13.45px;color:#525252;font-weight:normal;font-family:'Liberation Sans', sans-serif;">организацию и каких результатов вы достигли. Приведите краткие примеры.</div>
<div class="t" style="left:590px;top:602.00px;font-size:12.67px;line-height:12.67px;color:#525252;font-weight:bold;font-family:'Liberation Sans', sans-serif;">ДАТЫ НАЧАЛА И ОКОНЧАНИЯ</div>
<div class="t" style="left:590px;top:620.00px;font-size:16px;line-height:16px;color:#525252;font-weight:normal;font-family:'Liberation Sans', sans-serif;transform:scaleX(0.944);transform-origin:0 0"><b style="color:#1c7544">ДОЛЖНОСТЬ,</b> <span style="font-size:15.6px">ОРГАНИЗАЦИЯ</span></div>
<div class="t" style="left:590px;top:644.00px;font-size:13.45px;line-height:13.45px;color:#525252;font-weight:normal;font-family:'Liberation Sans', sans-serif;">Опишите свои обязанности и достижения в плане того, как они повлияли на</div>
<div class="t" style="left:590px;top:662.00px;font-size:13.45px;line-height:13.45px;color:#525252;font-weight:normal;font-family:'Liberation Sans', sans-serif;">организацию и каких результатов вы достигли. Приведите краткие примеры.</div>
<div class="t" style="left:545px;top:704.00px;font-size:18px;line-height:18px;color:#262626;font-weight:bold;font-family:'Liberation Serif', serif;transform:scaleX(1.2);transform-origin:0 0">ОБРАЗОВАНИЕ</div>
<div class="r" style="left:0px;top:736px;width:1438px;height:1px;background:#2a5391"></div>
<div class="t" style="left:8px;top:742.00px;font-size:11.3px;line-height:11.3px;color:#fff;font-weight:normal;font-family:'Liberation Sans', sans-serif;letter-spacing:-0.5px">СТРАНИЦА 1 ИЗ 1</div>
<div class="t" style="left:119px;top:742.00px;font-size:11.3px;line-height:11.3px;color:#fff;font-weight:normal;font-family:'Liberation Sans', sans-serif;letter-spacing:-0.5px">ЧИСЛО СЛОВ: 239</div>
<svg class="s" style="left:231px;top:739px;" width="18" height="15" viewBox="0 0 18 15"><path d="M7.5 11.5H1.5V1.5H6.5L7.5 2.5L8.5 1.5H13.5V3M13.5 9.5V11.5H8.5" fill="none" stroke="#fff" stroke-width="1.2"/><path d="M7.5 3V12.5" stroke="#fff" stroke-width="1.1"/><path d="M6 12L7.5 14L9 12Z" fill="#fff"/><path d="M9.5 10L10 8L15 3L16.5 4.5L11.5 9.5Z" fill="#fff"/></svg>
<div class="t" style="left:264px;top:742.00px;font-size:11.3px;line-height:11.3px;color:#fff;font-weight:normal;font-family:'Liberation Sans', sans-serif;letter-spacing:-0.5px">РУССКИЙ</div>
<div class="r" style="left:1173px;top:737px;width:38px;height:20px;background:#1f4b8a"></div>
<svg class="s" style="left:1146px;top:739px;" width="16" height="15" viewBox="0 0 16 15"><path d="M1.5 1.5H14.5V11.5H1.5Z" fill="none" stroke="#fff" stroke-width="1.2"/><path d="M3 3.5H7M9 3.5H13M3 5.5H7M9 5.5H13M3 7.5H7M9 7.5H13M3 9.5H7M9 9.5H13" stroke="#fff"/><path d="M8 1V13" stroke="#fff"/><path d="M6.8 12.5L8 14.5L9.2 12.5Z" fill="#fff"/></svg>
<svg class="s" style="left:1184px;top:739px;" width="16" height="15" viewBox="0 0 16 15"><path d="M1.6 1.6H14.4V13.4H1.6Z" fill="none" stroke="#fff" stroke-width="1.3"/><path d="M3.5 3.5H12.5M3.5 5.5H12.5M3.5 7.5H12.5M3.5 9.5H12.5M3.5 11.5H12.5" stroke="#fff"/></svg>
<svg class="s" style="left:1222px;top:739px;" width="17" height="15" viewBox="0 0 17 15"><path d="M7.5 12.5H1.5V1.5H12.5V5" fill="none" stroke="#fff" stroke-width="1.2"/><path d="M3.5 3.5H10.5M3.5 5.5H10.5M3.5 7.5H7.5M3.5 9.5H6.5" stroke="#fff"/><circle cx="11.5" cy="10" r="4.3" fill="#fff"/><path d="M9.5 7.5C10.5 8.5 11 9 10.5 10.5C10 11.5 11 12.5 11.5 13.5M12.5 6.5C12.5 8 13.5 8.5 14.5 8.5" fill="none" stroke="#2b579a" stroke-width="1.2"/></svg>
<div class="r" style="left:1254px;top:746px;width:6px;height:2px;background:#fff"></div>
<div class="r" style="left:1264px;top:746px;width:100px;height:1px;background:#fff"></div>
<div class="r" style="left:1312px;top:741px;width:4px;height:11px;background:#fff"></div>
<div class="r" style="left:1368px;top:746px;width:8px;height:2px;background:#fff"></div>
<div class="r" style="left:1371px;top:743px;width:2px;height:8px;background:#fff"></div>
<div class="t" style="left:1393px;top:742.00px;font-size:11.3px;line-height:11.3px;color:#fff;font-weight:normal;font-family:'Liberation Sans', sans-serif;letter-spacing:-0.5px">100%</div>
</body></html>
